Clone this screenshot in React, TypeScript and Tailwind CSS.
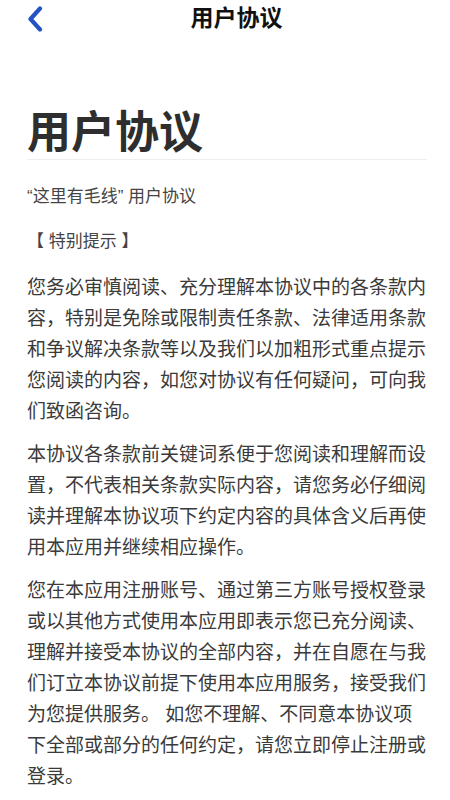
import React from "react";

const paragraphs = [
  "您务必审慎阅读、充分理解本协议中的各条款内容，特别是免除或限制责任条款、法律适用条款和争议解决条款等以及我们以加粗形式重点提示您阅读的内容，如您对协议有任何疑问，可向我们致函咨询。",
  "本协议各条款前关键词系便于您阅读和理解而设置，不代表相关条款实际内容，请您务必仔细阅读并理解本协议项下约定内容的具体含义后再使用本应用并继续相应操作。",
  "您在本应用注册账号、通过第三方账号授权登录或以其他方式使用本应用即表示您已充分阅读、理解并接受本协议的全部内容，并在自愿在与我们订立本协议前提下使用本应用服务，接受我们为您提供服务。 如您不理解、不同意本协议项下全部或部分的任何约定，请您立即停止注册或登录。",
];

const BackIcon: React.FC = () => (
  <svg width="16" height="26" viewBox="0 0 16 26" fill="none">
    <path d="M13 2.5 L3.5 13 L13 23.5" stroke="#2553c6" strokeWidth="4.2" strokeLinecap="round" strokeLinejoin="round" />
  </svg>
);

export default function App() {
  return (
    <div
      className="w-[450px] h-[800px] overflow-hidden bg-white"
      style={{ fontFamily: '"Liberation Sans", "Noto Sans CJK SC", sans-serif' }}
    >
      <header className="flex items-center h-[37px] px-[27px]">
        <button className="w-[23px] flex items-center">
          <BackIcon />
        </button>
        <h2 className="flex-1 text-center text-[23px] leading-none font-semibold text-[#111]">用户协议</h2>
      </header>

      <main className="pl-[27px] pr-[23px]">
        <h1 className="mt-[70px] text-[44px] leading-[52px] font-bold text-[#2e2e2e] border-b border-[#eeeeee]">
          用户协议
        </h1>
        <p className="mt-[25px] text-[17px] leading-[24px] text-[#444]">“这里有毛线” 用户协议</p>
        <p className="mt-[21px] text-[17px] leading-[24px] text-[#444]">【 特别提示 】</p>

        <div className="mt-[18px] flex flex-col gap-[12px]">
          {paragraphs.map((text, i) => (
            <p key={i} className="text-[19px] leading-[31px] text-[#3a3a3a]">
              {text}
            </p>
          ))}
        </div>
      </main>
    </div>
  );
}
